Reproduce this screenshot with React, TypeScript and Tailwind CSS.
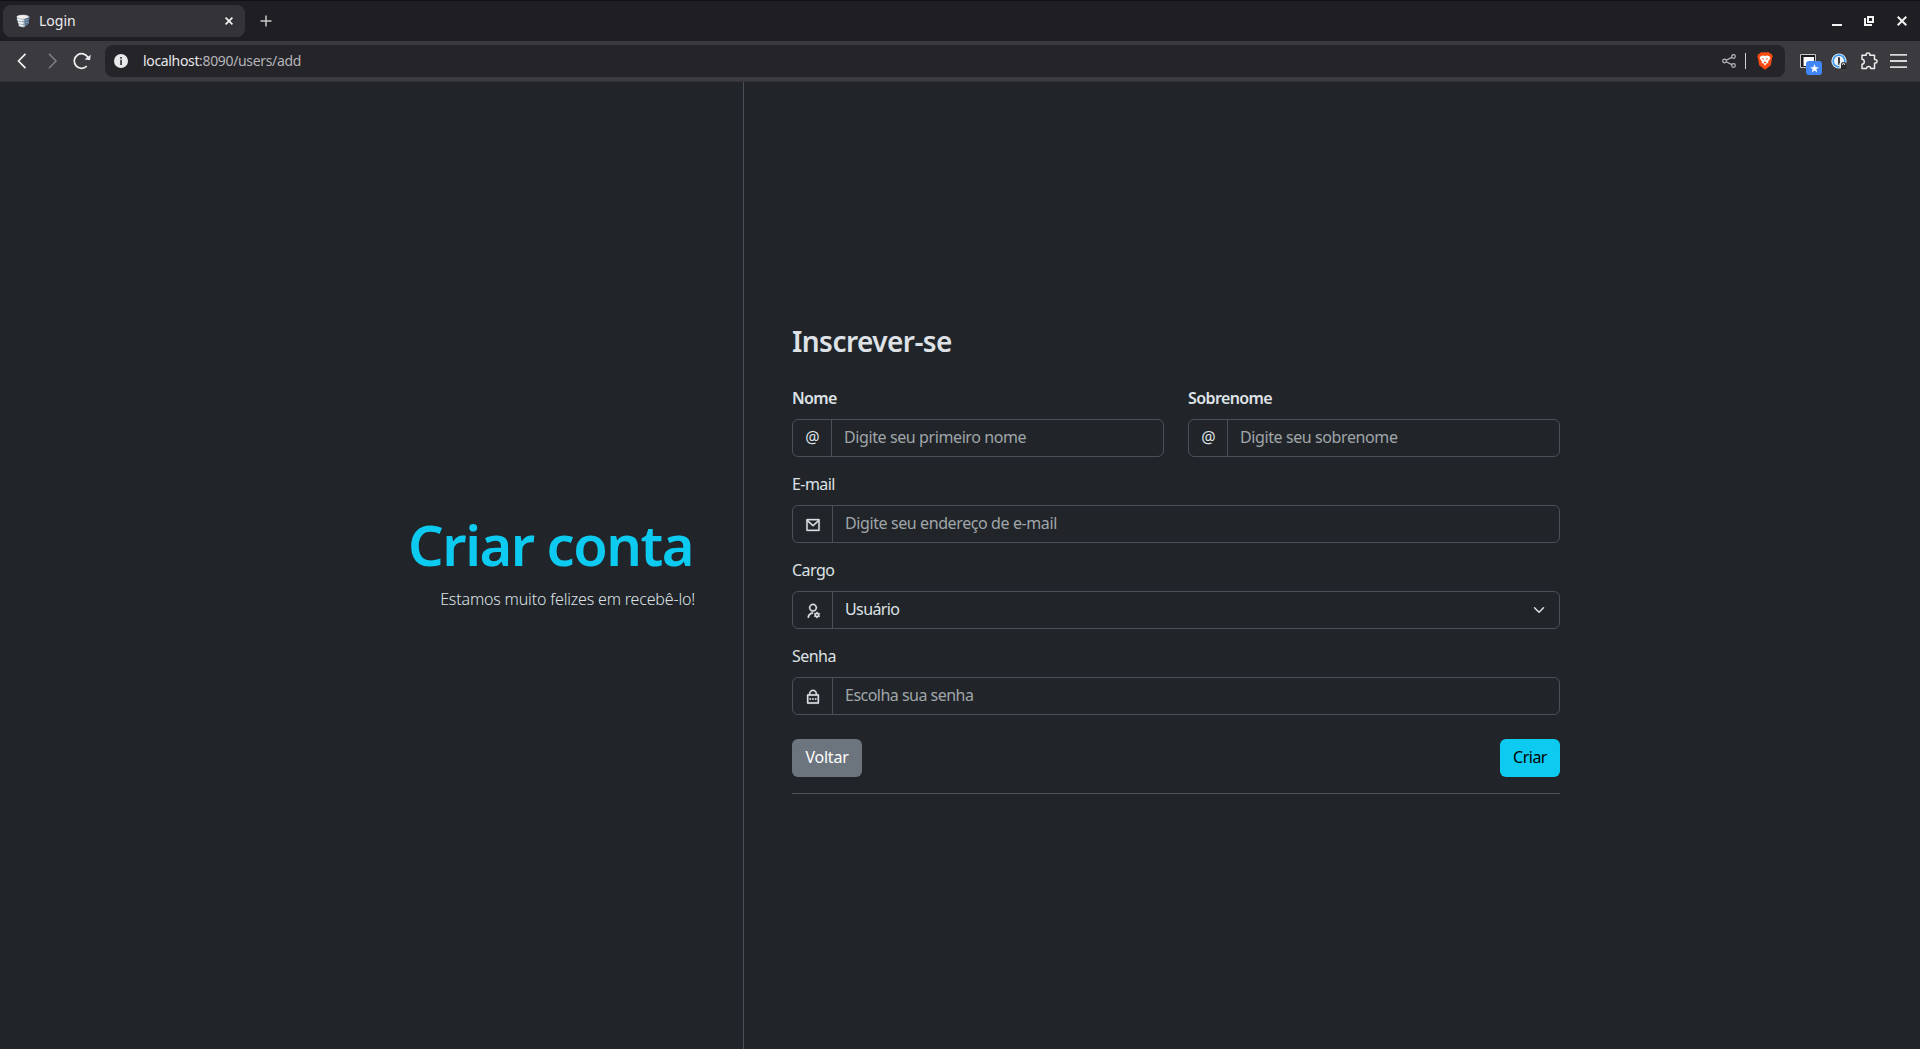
import type { ReactNode } from "react";
import { RiLockPasswordLine, RiMailLine, RiUserSettingsLine } from "react-icons/ri";

function Favicon() {
  return (
    <svg width="14" height="14" viewBox="0 0 14 14">
      <path d="M.5 2.5C2.5 0 11.500 0 13.500 2.500L12.500 9.500 8 13.500 3 12.500Z" fill="#9aa7b3" />
      <ellipse cx="6.500" cy="2.800" rx="5.600" ry="1.900" fill="#f0efec" />
      <path d="M1 5.200q3 1.500 6.500 1M2 8q3 1.500 5.500 1M3 10.800q2.500 1.300 4.500 1" stroke="#eef1f3" strokeWidth="1.600" fill="none" />
      <path d="M8.500 5l4.800-1.500-.8 5.500-3.500 3Z" fill="#4c6a88" />
      <path d="M9 6.500l3.500-1M9.200 9l3-1" stroke="#9db2c6" strokeWidth=".8" />
    </svg>
  );
}

function TabStrip() {
  return (
    <div className="flex h-[41px] items-center border-t border-[#121216] bg-[#1f1e23] pl-[3px] text-[#ececee]">
      <div className="flex h-8 w-[242px] items-center rounded-lg bg-[#343338] pl-[13px] pr-[12px]">
        <Favicon />
        <span className="ml-[9px] flex-1 pb-px text-[14px]">Login</span>
        <svg width="8" height="8" viewBox="0 0 8 8" stroke="#f4f4f5" strokeWidth="1.700">
          <path d="M.6.6l6.800 6.800M7.400.6L.6 7.400" />
        </svg>
      </div>
      <svg className="ml-[15px]" width="12" height="12" viewBox="0 0 12 12" stroke="#c9c9cc" strokeWidth="1.500">
        <path d="M6 .5v11M.5 6h11" />
      </svg>
      <div className="ml-auto flex items-center pr-[13px]">
        <svg width="10" height="10" viewBox="0 0 10 10" fill="#f2f2f3">
          <path d="M0 8h10v2H0z" />
        </svg>
        <svg className="ml-[22px]" width="10" height="10" viewBox="0 0 10 10" fill="none" stroke="#f2f2f3" strokeWidth="2">
          <path d="M4 1h5v5H4zM1 2v7h7" />
        </svg>
        <svg className="ml-[23px]" width="10" height="10" viewBox="0 0 10 10" stroke="#f2f2f3" strokeWidth="2">
          <path d="M.7.7l8.600 8.600M9.300.7L.7 9.300" />
        </svg>
      </div>
    </div>
  );
}

function BraveLion() {
  return (
    <svg className="ml-[11px]" width="16" height="18" viewBox="0 0 16 18">
      <path d="M4 .3h8l1.300 1.500 1.500.2.900 2.500-.6 1.500-1.300 7.300L8 17.700l-5.800-4.400L.9 6 .3 4.500 1.200 2l1.500-.2Z" fill="#fb4a12" />
      <path d="M3.700 4.200L6 3.600l2 .5 2-.5 2.300.6 1.200 1.900-2.400 3.500.3 1.300-1.900.5L8 13.800l-1.500-2.400-1.900-.5.3-1.300-2.400-3.500Z" fill="#fff" />
      <path d="M4.500 6l2.400.8-.4 1.300ZM11.500 6l-2.400.8.4 1.300ZM6.300 10.500l1.700-.9 1.700.9L8 11.600Z" fill="#fb4a12" />
    </svg>
  );
}

function Toolbar() {
  return (
    <div className="flex h-[41px] items-center border-b border-[#343439] bg-[#3b3a3f] pl-[17px] pr-[13px]">
      <svg width="10" height="16" viewBox="0 0 10 16" fill="none" stroke="#f0f0f2" strokeWidth="1.700">
        <path d="M8.500.8L1.500 8l7 7.200" />
      </svg>
      <svg className="ml-[21px]" width="10" height="16" viewBox="0 0 10 16" fill="none" stroke="#7e7d83" strokeWidth="1.600">
        <path d="M1 .8L8 8l-7 7.200" />
      </svg>
      <svg className="ml-[15px]" width="18" height="18" viewBox="0 0 18 18" fill="none" stroke="#f0f0f2" strokeWidth="1.700">
        <path d="M13.700 14.200A7.300 7.300 0 1 1 15 5.500" />
        <path d="M13 7l3.500.5.5-3.500Z" fill="#f0f0f2" strokeWidth="1.200" />
      </svg>
      <div className="ml-[14px] flex h-8 flex-1 items-center rounded-lg bg-[#252429] pl-[9px] pr-[12px]">
        <svg width="14" height="14" viewBox="0 0 14 14">
          <circle cx="7" cy="7" r="7" fill="#e9e9ec" />
          <path d="M6.200 3h1.700v1.700H6.200zM6.200 5.800h1.700V11H6.200z" fill="#35343a" />
        </svg>
        <span className="ml-[15px] flex-1 pb-[2px] text-[14px] tracking-[-0.34px] text-[#b4b4ba]">
          <span className="text-[#e8e8ea]">localhost</span>:8090/users/add
        </span>
        <svg width="14" height="14" viewBox="0 0 14 14" fill="none" stroke="#b9b9be" strokeWidth="1.200">
          <circle cx="2.500" cy="7" r="1.800" />
          <circle cx="11.500" cy="2.500" r="1.800" />
          <circle cx="11.500" cy="11.500" r="1.800" />
          <path d="M4.200 6.200l5.600-2.800M4.200 7.800l5.600 2.800" />
        </svg>
        <span className="ml-[9px] h-4 w-px bg-[#cfcfd3]" />
        <BraveLion />
      </div>
      <div className="relative ml-[15px] size-4">
        <svg width="16" height="16" viewBox="0 0 16 16">
          <path d="M.5 1.500h15v13H.5z" fill="#1b1b1e" stroke="#c8c8ca" />
          <path d="M3.500 4H14v9H3.500z" fill="#fff" />
        </svg>
        <span className="absolute left-[6px] top-[8px] flex h-[14px] w-4 items-center justify-center rounded-[3px] bg-[#4285f4]">
          <svg width="9" height="9" viewBox="0 0 10 10" fill="#fff">
            <path d="M5 0l1.300 3.500H10L7 5.800 8.100 9.500 5 7.300 1.900 9.500 3 5.800 0 3.500h3.700Z" />
          </svg>
        </span>
      </div>
      <svg className="ml-[15px]" width="16" height="16" viewBox="0 0 16 16">
        <circle cx="8" cy="8" r="7.600" fill="#eff3f7" />
        <circle cx="8" cy="8" r="5.900" fill="none" stroke="#3d9bef" strokeWidth="1.700" />
        <path d="M7 4.200h2v7.600H7z" fill="#3b3a3f" />
        <path d="M10 16v-4.500q0-2.500 2.700-2.500T15.500 11.500V16Z" fill="#29292c" />
        <path d="M8.500 10H10V15H8.500z" fill="#eee" />
        <path d="M11.600 11.800v-1q1-1 2 0v1" fill="none" stroke="#fff" />
      </svg>
      <svg className="ml-[13px]" width="18" height="18" viewBox="0 0 18 18" fill="none" stroke="#ececee" strokeWidth="1.500" strokeLinejoin="round">
        <path d="M2 3.200h4.200Q5.800.9 8 .9T9.800 3.200H14.500V7.500Q17 7.300 17 9.300T14.500 11.300V16.500H10.700Q10.700 14.600 8.700 14.600T6.500 16.500H2V12.300Q4.300 12 4.300 9.700T2 7.200Z" />
      </svg>
      <svg className="ml-[12px]" width="17" height="14" viewBox="0 0 17 14" fill="#d8d8da">
        <path d="M0 0h17v1.800H0zM0 6.100h17v1.800H0zM0 12.200h17V14H0z" />
      </svg>
    </div>
  );
}

function Field({ label, addon, wide, bold, children }: { label: string; addon: ReactNode; wide?: boolean; bold?: boolean; children: ReactNode }) {
  return (
    <div className="flex-1">
      <label className={bold ? "mb-[9px] -mt-px block font-semibold leading-6 tracking-[-0.6px]" : "mb-[9px] -mt-px block leading-6 tracking-[-0.55px]"}>{label}</label>
      <div className="flex h-[38px] rounded-md border border-[#495057]">
        <span className={wide ? "flex w-10 items-center justify-center border-r border-[#495057] pt-[2px] [&_path]:stroke-current [&_path]:[stroke-width:0.5]" : "flex w-[39px] items-center justify-center border-r border-[#495057] pb-px pl-px"}>
          {addon}
        </span>
        {children}
      </div>
    </div>
  );
}

function TextInput({ placeholder, type = "text" }: { placeholder: string; type?: string }) {
  return (
    <input
      type={type}
      placeholder={placeholder}
      className={type === "password" ? "min-w-0 flex-1 bg-transparent px-3 pb-[2px] tracking-[-0.52px] outline-none placeholder:text-[#a0a5aa]" : "min-w-0 flex-1 bg-transparent px-3 pb-[2px] tracking-[-0.4px] outline-none placeholder:text-[#a0a5aa]"}
    />
  );
}

export default function App() {
  return (
    <div className="flex h-[1049px] flex-col bg-[#212529] font-['Noto_Sans',sans-serif] text-base text-[#dee2e6]">
      <TabStrip />
      <Toolbar />
      <main className="flex flex-1">
        <section className="flex w-[744px] flex-col items-end justify-center border-r border-[#495057] pb-[9px] pr-12">
          <h1 className="mb-[10px] mr-[2px] text-[56px] font-semibold leading-[66px] tracking-[-1.500px] text-[#0dcaf0]">Criar conta</h1>
          <p className="font-light leading-6 tracking-[-0.17px]">Estamos muito felizes em recebê-lo!</p>
        </section>
        <section className="flex w-[864px] flex-col justify-center px-12 pb-[14px]">
          <h3 className="mb-[29px] text-[28px] font-semibold leading-[34px] tracking-[-0.55px]">Inscrever-se</h3>
          <form className="flex flex-col gap-4">
            <div className="flex gap-6">
              <Field label="Nome" addon="@" bold>
                <TextInput placeholder="Digite seu primeiro nome" />
              </Field>
              <Field label="Sobrenome" addon="@" bold>
                <TextInput placeholder="Digite seu sobrenome" />
              </Field>
            </div>
            <Field label="E-mail" addon={<RiMailLine />} wide>
              <TextInput placeholder="Digite seu endereço de e-mail" />
            </Field>
            <Field label="Cargo" addon={<RiUserSettingsLine />} wide>
              <div className="flex flex-1 items-center justify-between px-3">
                <span className="pb-[2px] tracking-[-0.6px]">Usuário</span>
                <svg className="mr-[2px]" width="12" height="12" viewBox="0 0 16 16" fill="none" stroke="#dee2e6" strokeWidth="2" strokeLinecap="round" strokeLinejoin="round">
                  <path d="m2 5 6 6 6-6" />
                </svg>
              </div>
            </Field>
            <Field label="Senha" addon={<RiLockPasswordLine />} wide>
              <TextInput type="password" placeholder="Escolha sua senha" />
            </Field>
            <div className="mt-2 flex justify-between">
              <button type="button" className="h-[38px] w-[70px] rounded-md bg-[#6c757d] pb-[2px] tracking-[-0.2px] text-white">Voltar</button>
              <button type="button" className="h-[38px] w-[60px] rounded-md bg-[#0dcaf0] pb-[2px] tracking-[-0.5px] text-black">Criar</button>
            </div>
            <hr className="border-t border-[#4f5458]" />
          </form>
        </section>
      </main>
    </div>
  );
}
